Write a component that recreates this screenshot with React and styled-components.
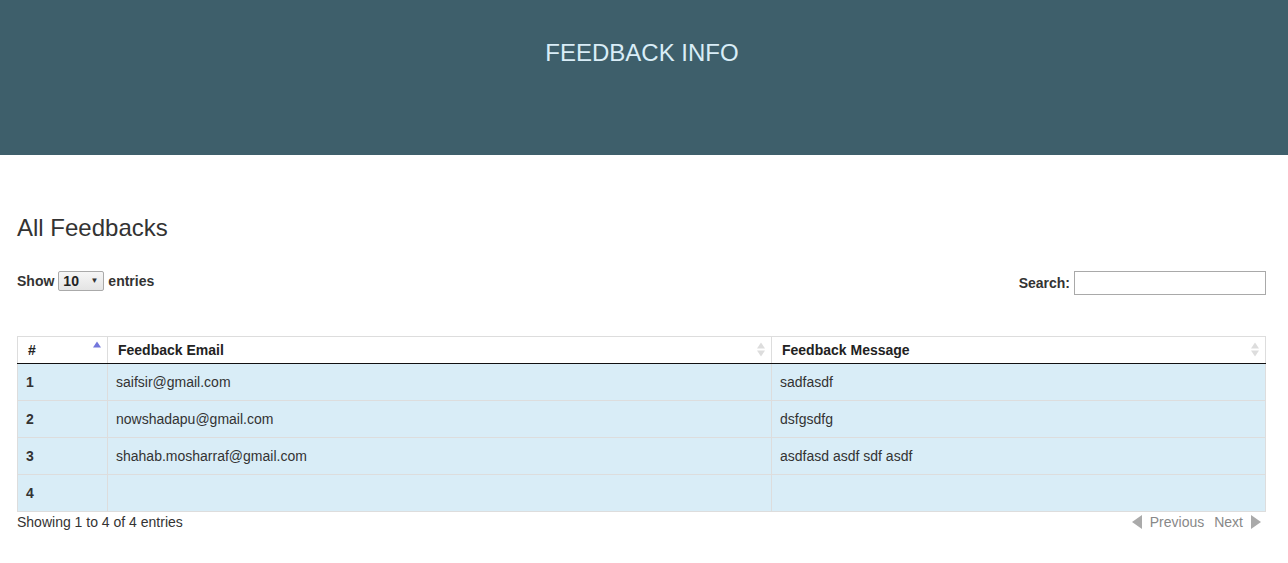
import React from "react";
import styled, { createGlobalStyle } from "styled-components";

const Global = createGlobalStyle`
  html, body { margin: 0; padding: 0; background: #fff; }
  body { font-family: "Liberation Sans", Arial, sans-serif; font-size: 14px; line-height: 20px; color: #333; }
  * { box-sizing: border-box; }
`;

const Banner = styled.header`
  height: 155px;
  background: #3e5f6b;
  display: flex;
  justify-content: center;
  padding-top: 38px;
`;

const BannerTitle = styled.h1`
  margin: 0 4px 0 0;
  font-size: 24px;
  font-weight: 400;
  line-height: 30px;
  color: #d9edf7;
  height: 30px;
`;

const Main = styled.main`
  padding: 0 22px 0 17px;
`;

const Heading = styled.h3`
  margin: 58px 0 0 0;
  font-size: 24px;
  font-weight: 400;
  line-height: 30px;
  color: #333;
`;

const Controls = styled.div`
  display: flex;
  justify-content: space-between;
  align-items: flex-start;
  margin-top: 28px;
  height: 65px;
`;

const Label = styled.label`
  display: flex;
  align-items: center;
  font-weight: bold;
  font-size: 14px;
  color: #333;
  gap: ${(p) => p.$gap || 4}px;
`;

const SelectBox = styled.span`
  display: inline-flex;
  align-items: center;
  justify-content: space-between;
  width: 46px;
  height: 20px;
  border: 1px solid #aaa;
  border-radius: 2px;
  background: linear-gradient(#f6f6f6, #e4e4e4);
  padding: 0 5px 0 4px;
  font-size: 14px;
  font-weight: bold;
  color: #222;
`;

const Caret = styled.span`
  font-size: 8px;
  color: #333;
  line-height: 1;
`;

const SearchRow = styled(Label)`
  margin-top: 0;
`;

const SearchInput = styled.span`
  display: inline-block;
  width: 192px;
  height: 24px;
  border: 1px solid #a9a9a9;
  background: #fff;
`;

const Table = styled.table`
  width: 100%;
  border-collapse: collapse;
  font-size: 14px;
`;

const Th = styled.th`
  position: relative;
  text-align: left;
  font-weight: bold;
  padding: 3px 18px 3px 10px;
  line-height: 20px;
  border: 1px solid #ddd;
  border-bottom: 1px solid #111;
  width: ${(p) => p.$w || "auto"};
  color: #222;
`;

const Td = styled.td`
  padding: 8px;
  line-height: 20px;
  border: 1px solid #ddd;
  border-top: ${(p) => (p.$first ? "none" : "1px solid #ddd")};
  background: #d9edf7;
  font-weight: ${(p) => (p.$bold ? "bold" : "normal")};
  color: #333;
`;

const SortIcon = styled.svg`
  position: absolute;
  right: 5px;
  top: 50%;
  transform: translateY(-50%);
`;

const Footer = styled.div`
  display: flex;
  justify-content: space-between;
  align-items: center;
  height: 20px;
`;

const Pager = styled.div`
  display: flex;
  align-items: center;
  padding-right: 4px;
  color: #888;
  font-size: 14px;
`;

const PageLink = styled.span`
  display: inline-flex;
  align-items: center;
  gap: 7px;
  margin-left: ${(p) => p.$ml || 0}px;
  color: #888;
`;

const AscIcon = () => (
  <SortIcon width="10" height="19" viewBox="0 0 10 19">
    <polygon points="1,7 5,1 9,7" fill="#7377dc" />
  </SortIcon>
);

const BothIcon = () => (
  <SortIcon width="10" height="19" viewBox="0 0 10 19">
    <polygon points="1,8 5,2 9,8" fill="#ddd" />
    <polygon points="1,10 5,16 9,10" fill="#ddd" />
  </SortIcon>
);

const rows = [
  ["1", "saifsir@gmail.com", "sadfasdf"],
  ["2", "nowshadapu@gmail.com", "dsfgsdfg"],
  ["3", "shahab.mosharraf@gmail.com", "asdfasd asdf sdf asdf"],
  ["4", "", ""],
];

export default function App() {
  return (
    <>
      <Global />
      <Banner>
        <BannerTitle>FEEDBACK INFO</BannerTitle>
      </Banner>
      <Main>
        <Heading>All Feedbacks</Heading>
        <Controls>
          <Label>
            Show
            <SelectBox>
              10
              <Caret>▼</Caret>
            </SelectBox>
            entries
          </Label>
          <SearchRow $gap={4}>
            Search:
            <SearchInput />
          </SearchRow>
        </Controls>
        <Table>
          <thead>
            <tr>
              <Th $w="90px">
                #<AscIcon />
              </Th>
              <Th $w="664px">
                Feedback Email
                <BothIcon />
              </Th>
              <Th>
                Feedback Message
                <BothIcon />
              </Th>
            </tr>
          </thead>
          <tbody>
            {rows.map((r, i) => (
              <tr key={i}>
                <Td $bold $first={i === 0}>{r[0]}</Td>
                <Td $first={i === 0}>{r[1]}</Td>
                <Td $first={i === 0}>{r[2]}</Td>
              </tr>
            ))}
          </tbody>
        </Table>
        <Footer>
          <span>Showing 1 to 4 of 4 entries</span>
          <Pager>
            <PageLink>
              <svg width="12" height="14" viewBox="0 0 12 14">
                <polygon points="11,0 1,7 11,14" fill="#aaa" />
              </svg>
              Previous
            </PageLink>
            <PageLink $ml={10}>
              Next
              <svg width="12" height="14" viewBox="0 0 12 14">
                <polygon points="1,0 11,7 1,14" fill="#aaa" />
              </svg>
            </PageLink>
          </Pager>
        </Footer>
      </Main>
    </>
  );
}
